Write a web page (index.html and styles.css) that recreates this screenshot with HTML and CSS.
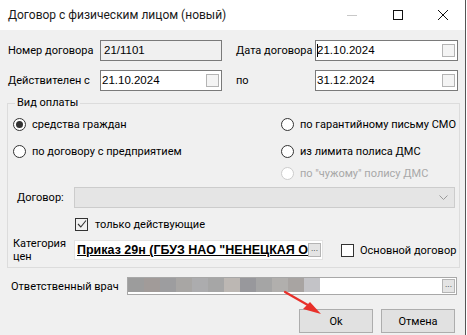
FILE: index.html
```html
<!DOCTYPE html>
<html lang="ru">
<head>
    <meta charset="UTF-8">
    <title>Договор с физическим лицом (новый)</title>
    <link rel="stylesheet" href="styles.css">
</head>
<body>
    <div class="window">
        <div class="titlebar">
            <span class="title">Договор с физическим лицом (новый)</span>
            <div class="controls">
                <span class="ctl ctl-min"><svg width="12" height="12" viewBox="0 0 12 12"><path d="M1 6.5h10" stroke="#c8c8c8" stroke-width="1"/></svg></span>
                <span class="ctl"><svg width="12" height="12" viewBox="0 0 12 12"><rect x="1.5" y="1.5" width="9" height="9" fill="none" stroke="#111" stroke-width="1"/></svg></span>
                <span class="ctl"><svg width="12" height="12" viewBox="0 0 12 12"><path d="M1 1l10 10M11 1L1 11" stroke="#111" stroke-width="1"/></svg></span>
            </div>
        </div>

        <div class="content">
            <div class="row">
                <label class="lbl lbl-main">Номер договора</label>
                <div class="input input-num readonly">21/1101</div>
                <label class="lbl lbl-side">Дата договора</label>
                <div class="input input-date"><span class="caret"></span>21.10.2024<span class="chk-small"></span></div>
            </div>
            <div class="row row-2">
                <label class="lbl lbl-main">Действителен с</label>
                <div class="input input-num">21.10.2024<span class="chk-small"></span></div>
                <label class="lbl lbl-side">по</label>
                <div class="input input-date">31.12.2024<span class="chk-small"></span></div>
            </div>

            <fieldset class="group">
                <legend>Вид оплаты</legend>
                <div class="pay-grid">
                    <div class="pay-col">
                        <div class="radio checked"><span class="dot"></span>средства граждан</div>
                        <div class="radio"><span class="dot"></span>по договору с предприятием</div>
                    </div>
                    <div class="pay-col pay-right">
                        <div class="radio"><span class="dot"></span>по гарантийному письму СМО</div>
                        <div class="radio"><span class="dot"></span>из лимита полиса ДМС</div>
                        <div class="radio disabled"><span class="dot"></span>по "чужому" полису ДМС</div>
                    </div>
                </div>

                <div class="field-row contract-row">
                    <label class="lbl lbl-contract">Договор:</label>
                    <div class="combo">
                        <svg width="9" height="6" viewBox="0 0 9 6"><path d="M0.5 0.5l4 4 4-4" fill="none" stroke="#9a9a9a" stroke-width="1"/></svg>
                    </div>
                </div>

                <div class="check-row">
                    <span class="check checked">
                        <svg width="10" height="10" viewBox="0 0 10 10"><path d="M1 5l2.8 3L9 1.5" fill="none" stroke="#333" stroke-width="1.1"/></svg>
                    </span>
                    только действующие
                </div>

                <div class="field-row price-row">
                    <label class="lbl lbl-price">Категория<br>цен</label>
                    <div class="price-box">
                        <span class="price-text">Приказ 29н (ГБУЗ НАО "НЕНЕЦКАЯ О</span>
                        <span class="ellipsis">...</span>
                    </div>
                    <div class="main-check">
                        <span class="check"></span>
                        Основной договор
                    </div>
                </div>
            </fieldset>

            <div class="field-row doctor-row">
                <label class="lbl lbl-doctor">Ответственный врач</label>
                <div class="doctor-box">
                    <div class="blur">
                        <span style="background:#9c9c9c"></span>
                        <span style="background:#a19b99"></span>
                        <span style="background:#9d9d9f"></span>
                        <span style="background:#a8a6a4"></span>
                        <span style="background:#acacae"></span>
                        <span style="background:#a6a6a6"></span>
                        <span style="background:#bcb7b3"></span>
                        <span style="background:#98989c"></span>
                        <span style="background:#a5a5a5"></span>
                        <span style="background:#b1afad"></span>
                        <span style="background:#a8a4a2"></span>
                        <span style="background:#c3c3c7"></span>
                    </div>
                    <span class="ellipsis">...</span>
                </div>
            </div>

            <div class="buttons">
                <button class="btn">Ok</button>
                <button class="btn">Отмена</button>
            </div>
        </div>

        <svg class="arrow" width="60" height="40" viewBox="0 0 60 40">
            <path d="M2 2L30 18" stroke="#e8302a" stroke-width="2.2" stroke-linecap="round"/>
            <path d="M38 24L20 19L27 12Z" fill="#e8302a"/>
        </svg>
    </div>
</body>
</html>
```

FILE: styles.css
```css
body {
    margin: 0;
    background: #ffffff;
    font-family: Roboto, "Liberation Sans", sans-serif;
    font-size: 11px;
    color: #000;
}
.window {
    position: relative;
    width: 465px;
    height: 335px;
    background: #f0f0f0;
    border-right: 1px solid #555;
    white-space: nowrap;
}
.titlebar {
    height: 30px;
    background: #fff;
    display: flex;
    align-items: center;
    justify-content: space-between;
}
.title {
    padding-left: 8px;
    font-size: 12px;
    color: #1a1a1a;
}
.controls {
    display: flex;
    height: 30px;
}
.ctl {
    width: 45px;
    display: flex;
    align-items: center;
    justify-content: center;
}
.ctl-min {
    width: 46px;
}

.content {
    padding: 0 6px 0 7px;
}
.row {
    display: flex;
    align-items: center;
    height: 21px;
    margin-top: 10px;
}
.row-2 {
    margin-top: 9px;
}
.lbl {
    font-size: 11px;
    color: #000;
    flex: none;
}
.lbl-main {
    width: 92px;
    padding-left: 1px;
}
.lbl-side {
    width: 79px;
    margin-left: 14px;
}
.input {
    position: relative;
    box-sizing: border-box;
    flex: none;
    height: 21px;
    border: 1px solid #7a7a7a;
    background: #fff;
    font-family: "Liberation Sans", sans-serif;
    font-size: 11.5px;
    line-height: 19px;
    padding-left: 1px;
    display: flex;
    align-items: center;
}
.input-num {
    width: 122px;
}
.input-date {
    width: 143px;
}
.readonly {
    background: #f0f0f0;
    padding-left: 3px;
}
.caret {
    width: 1px;
    height: 13px;
    background: #000;
    margin-right: -1px;
}
.chk-small {
    position: absolute;
    right: 2px;
    top: 3px;
    width: 11px;
    height: 11px;
    border: 1px solid #b4b4b4;
    background: #f4f4f4;
}

.group {
    margin: 5px 0 0 0;
    padding: 3px 0 4px 0;
    border: 1px solid #dcdcdc;
    width: 451px;
    box-sizing: content-box;
}
.group legend {
    margin-left: 7px;
    padding: 0 2px;
    line-height: 14px;
}
.pay-grid {
    display: flex;
}
.pay-col {
    width: 268px;
    padding-left: 5px;
}
.pay-right {
    width: auto;
    padding-left: 0;
}
.radio {
    height: 22px;
    display: flex;
    align-items: center;
    gap: 6px;
}
.radio + .radio {
    margin-top: 5px;
}
.pay-right .radio.disabled {
    margin-top: 0;
}
.radio .dot {
    box-sizing: border-box;
    width: 13px;
    height: 13px;
    border: 1px solid #333;
    border-radius: 50%;
    background: #fff;
    display: flex;
    align-items: center;
    justify-content: center;
}
.radio.checked .dot::after {
    content: "";
    width: 7px;
    height: 7px;
    border-radius: 50%;
    background: #333;
}
.radio.disabled {
    color: #a8a8a8;
}
.radio.disabled .dot {
    border-color: #cccccc;
}

.field-row {
    display: flex;
    align-items: center;
}
.contract-row {
    height: 21px;
    margin-top: 3px;
}
.lbl-contract {
    width: 57px;
    padding-left: 9px;
}
.combo {
    box-sizing: border-box;
    width: 381px;
    height: 21px;
    border: 1px solid #cccccc;
    background: #e5e5e5;
    display: flex;
    align-items: center;
    justify-content: flex-end;
    padding-right: 6px;
}
.check-row {
    display: flex;
    align-items: center;
    gap: 7px;
    height: 14px;
    margin: 9px 0 0 67px;
}
.check {
    box-sizing: border-box;
    width: 13px;
    height: 13px;
    border: 1px solid #333;
    background: #fff;
    display: flex;
    align-items: center;
    justify-content: center;
}
.check.checked {
    background: #f0f0f0;
}
.price-row {
    height: 26px;
    margin-top: 6px;
}
.lbl-price {
    width: 61px;
    padding-left: 5px;
    line-height: 13px;
}
.price-box {
    box-sizing: border-box;
    flex: none;
    width: 249px;
    height: 20px;
    border: 1px solid #e3e3e3;
    background: #fff;
    display: flex;
    align-items: center;
    justify-content: space-between;
    padding-left: 2px;
    overflow: hidden;
}
.price-text {
    font-family: "Liberation Sans", sans-serif;
    font-weight: bold;
    font-size: 12.5px;
    text-decoration: underline;
    overflow: hidden;
}
.ellipsis {
    flex: none;
    box-sizing: border-box;
    width: 13px;
    height: 14px;
    margin-right: 1px;
    border: 1px solid #b4b4b4;
    background: #e4e4e4;
    font-size: 9px;
    line-height: 9px;
    text-align: center;
    color: #333;
}
.main-check {
    display: flex;
    align-items: center;
    gap: 6px;
    margin-left: 18px;
}

.doctor-row {
    height: 18px;
    margin-top: 9px;
}
.lbl-doctor {
    width: 116px;
    padding-left: 4px;
}
.doctor-box {
    box-sizing: border-box;
    width: 330px;
    height: 18px;
    border: 1px solid #a8a8a8;
    background: #fff;
    display: flex;
    align-items: center;
    justify-content: space-between;
}
.blur {
    display: flex;
    height: 14px;
    align-self: flex-start;
}
.blur span {
    width: 16px;
    height: 14px;
}
.buttons {
    display: flex;
    justify-content: flex-end;
    gap: 8px;
    margin-top: 14px;
    padding-right: 4px;
}
.btn {
    width: 74px;
    height: 24px;
    border: 1px solid #adadad;
    background: #e1e1e1;
    font-family: Roboto, sans-serif;
    font-size: 11px;
    color: #000;
    padding: 0;
}
.arrow {
    position: absolute;
    left: 283px;
    top: 290px;
}
```
